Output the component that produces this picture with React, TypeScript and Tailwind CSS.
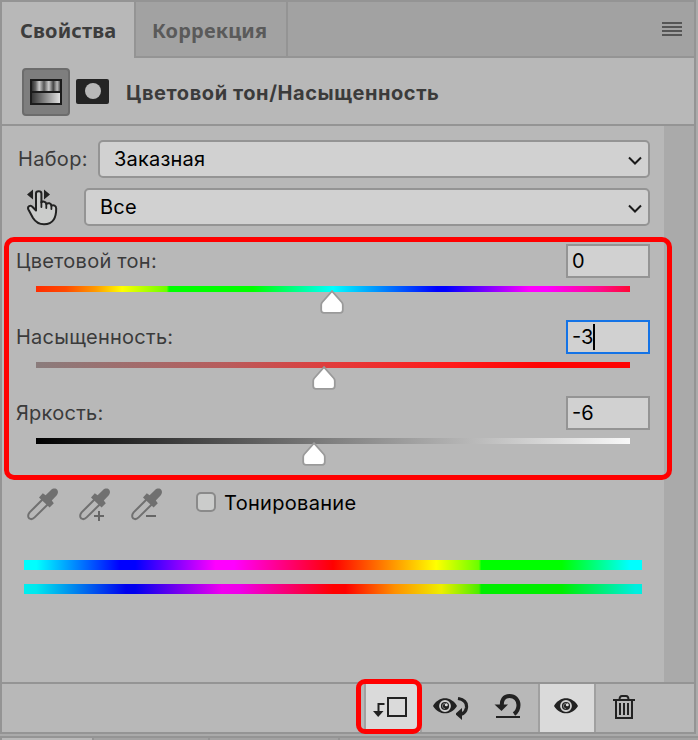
import React, { useState } from 'react';

const HUE_TRACK =
  'linear-gradient(90deg,#ff2d00 0%,#ff4a00 5%,#ff9a00 10%,#ffff00 14.5%,#6aff00 22%,#00ff00 22.4%,#00ff00 36.5%,#00ffff 50%,#0000ff 67.5%,#0000ff 69%,#ff00ff 83%,#ff00ff 86%,#ff0a8a 95%,#ff0835 100%)';
const SATURATION_TRACK = 'linear-gradient(90deg,#8a7c7c 0%,#b85c5c 32%,#e53838 52%,#ff1a1a 70%,#ff0404 85%,#ff0404 100%)';
const LIGHTNESS_TRACK = 'linear-gradient(90deg,#000000 0%,#808080 50%,#f8f8f8 100%)';

const SPECTRUM =
  'linear-gradient(90deg,#00ffff 0%,#00ffff 2%,#0000ff 15.5%,#0000ff 18%,#ff00ff 31%,#ff00ff 34%,#ff0000 50%,#ff9a00 60%,#ffff00 66.7%,#6aff00 73.6%,#00ff00 74%,#00ff00 87%,#00ffff 98%,#00ffff 100%)';
const SPECTRUM_RESULT =
  'linear-gradient(90deg,#00eeee 0%,#00e8ee 2%,#0000ee 16.5%,#0000ee 18%,#f000f0 32%,#f000e8 35%,#ff0000 50%,#ff0000 52%,#ff9000 60%,#eeee00 67.5%,#4cee00 73.6%,#00ee00 74%,#00ee00 87%,#00eee0 99%,#00eee0 100%)';

interface SliderRowProps {
  label: string;
  value: string;
  track: string;
  position: number;
  focused?: boolean;
}

function SliderRow({ label, value, track, position, focused = false }: SliderRowProps) {
  return (
    <div className="h-[76px]">
      <div className="flex h-[34px] items-center justify-between">
        <span className="text-[20px] leading-[34px] tracking-[0.25px] text-[#3b3b3b]">{label}</span>
        <div
          className={
            focused
              ? 'flex h-[34px] w-[84px] items-center border-2 border-[#1473e6] bg-[#d1d1d1] pl-1 text-[20px] text-black'
              : 'flex h-[34px] w-[84px] items-center border-2 border-[#949494] bg-[#d1d1d1] pl-1 text-[20px] text-black'
          }
        >
          <span>{value}</span>
          {focused && <span className="h-[26px] w-[2px] bg-black" />}
        </div>
      </div>
      <div className="relative mt-2 mr-5 ml-5 h-[6px]" style={{ background: track }}>
        <svg
          className="absolute top-[4px] h-6 w-6 -translate-x-1/2"
          style={{ left: position }}
          viewBox="0 0 24 24"
        >
          <path
            d="M12 1.2 L22 12.5 Q22.8 13.6 22.8 15 V20 Q22.8 22.8 20 22.8 H4 Q1.2 22.8 1.2 20 V15 Q1.2 13.6 2 12.5 Z"
            fill="#fff"
            stroke="#9a9a9a"
            strokeWidth="1.8"
          />
        </svg>
      </div>
    </div>
  );
}

function Select({ value }: { value: string }) {
  return (
    <div className="flex h-[38px] flex-1 items-center justify-between rounded-[5px] border-2 border-[#949494] bg-[#d1d1d1] pr-[6px] pl-[14px] text-[20px] tracking-[0.2px] text-black">
      <span>{value}</span>
      <svg width="14" height="10" viewBox="0 0 14 10" fill="none" className="mt-[3px]">
        <path d="M1 1.5 L7 7.5 L13 1.5" stroke="#1a1a1a" strokeWidth="2" />
      </svg>
    </div>
  );
}

function Eyedropper({ mode }: { mode?: 'plus' | 'minus' }) {
  return (
    <svg width="32" height="34" viewBox="0 0 32 34" fill="none">
      <path
        d="M15.5 11.5 L2.6 24.4 C0.5 27 1 29.5 2.2 30.3 C3.6 31.4 6 31 7.6 29.4 L20.7 16.5"
        stroke="#707070"
        strokeWidth="2"
      />
      <path
        d="M12 9.5 L15.8 5.2 L18.6 7.3 L24 2 C26 0 29.2 0.4 30.2 1.8 C31.4 3.4 31.2 5.8 29.6 7.4 L24.8 12.4 L26.8 15.2 L22.6 19.4 Z"
        fill="#707070"
      />
      {mode === 'plus' && <path d="M15 28 H25 M20 23 V33" stroke="#666" strokeWidth="2" />}
      {mode === 'minus' && <path d="M15 28 H25" stroke="#666" strokeWidth="2" />}
    </svg>
  );
}

function ScrubHand() {
  return (
    <svg width="32" height="38" viewBox="0 0 32 38" fill="none">
      <path d="M0 6.5 L6 1.5 V11.5 Z M23 6.5 L17 1.5 V11.5 Z" fill="#222" />
      <path
        d="M9 22.5 V5.5 C9 2.4 14.4 2.4 14.4 5.5 V14.5 C15.5 13 19 13.4 19.3 16 C21 14.5 24.2 15.2 24.4 17.6 C26.5 16.5 29.2 17.5 29.2 20.5 C29.2 25 29 28 26.8 31.5 C24.5 35 21 36.3 17 36.3 C12 36.3 8.5 34 6 30 L1.4 21.5 C0 18.3 3.5 16.6 5.6 19 Z"
        fill="#cbcccb"
        stroke="#222"
        strokeWidth="2"
        strokeLinejoin="round"
      />
      <path d="M14.4 14 V19 M19.3 16 V20 M24.4 17.5 V21" stroke="#222" strokeWidth="1.8" strokeLinecap="round" />
    </svg>
  );
}

function HueSaturationIcon() {
  return (
    <svg width="32" height="26" viewBox="0 0 32 26">
      <defs>
        <linearGradient id="bands">
          <stop offset="0" stopColor="#333" />
          <stop offset=".13" stopColor="#666" />
          <stop offset=".26" stopColor="#ccc" />
          <stop offset=".43" stopColor="#555" />
          <stop offset=".6" stopColor="#ccc" />
          <stop offset=".76" stopColor="#444" />
          <stop offset=".9" stopColor="#bbb" />
          <stop offset="1" stopColor="#555" />
        </linearGradient>
        <linearGradient id="ramp">
          <stop offset="0" stopColor="#383838" />
          <stop offset="1" stopColor="#e0e0e0" />
        </linearGradient>
      </defs>
      <rect width="32" height="26" fill="#1c1c1c" />
      <rect x="2" y="2" width="28" height="10" fill="url(#bands)" />
      <rect x="2" y="14" width="28" height="10" fill="url(#ramp)" />
    </svg>
  );
}

function Eye() {
  return (
    <svg width="24" height="16" viewBox="0 0 24 16" fill="none">
      <path d="M0 8 C6 -2.2 18 -2.2 24 8 C18 17.8 6 17.8 0 8 Z" fill="#222" />
      <circle cx="12" cy="8" r="5" stroke="#d0d0d0" strokeWidth="1.8" />
      <path d="M12 5.4 A2.6 2.6 0 0 0 12 10.6" stroke="#777" strokeWidth="1" />
      <circle cx="13.3" cy="6.7" r="1.5" fill="#ddd" />
    </svg>
  );
}

export default function App() {
  const [tab] = useState('properties');

  return (
    <div className="relative h-[740px] w-[698px] overflow-hidden bg-[#aaaaaa] font-['Inter','Noto_Sans',sans-serif]">
      <div className="flex h-[734px] w-[696px] flex-col border-2 border-[#949494] bg-[#b8b8b8]">
        {/* Tabs */}
        <div className="flex h-14 shrink-0 bg-[#a2a2a2] font-['Noto_Sans',sans-serif] text-[20px] font-bold tracking-[0.15px]">
          <div
            className={
              tab === 'properties'
                ? 'w-[132px] bg-[#b8b8b8] pl-[18px] leading-[58px] text-[#3d3d3d]'
                : 'w-[132px] border-b-2 border-[#949494] pl-[18px] leading-[58px]'
            }
          >
            Свойства
          </div>
          <div className="w-[154px] border-x-2 border-b-2 border-[#949494] pl-4 leading-[58px] text-[#5a5a5a]">
            Коррекция
          </div>
          <div className="flex flex-1 justify-end border-b-2 border-[#949494] pt-5 pr-3">
            <div className="flex h-[14px] w-5 flex-col justify-between">
              <div className="h-[2px] bg-[#555]" />
              <div className="h-[2px] bg-[#555]" />
              <div className="h-[2px] bg-[#555]" />
              <div className="h-[2px] bg-[#555]" />
            </div>
          </div>
        </div>

        {/* Adjustment header */}
        <div className="flex h-[68px] shrink-0 items-center border-b-2 border-[#949494] pl-5">
          <div className="mt-[2px] flex h-12 w-12 items-center justify-center rounded-[4px] border-2 border-[#6c6c6c] bg-[#7e7e7e]">
            <HueSaturationIcon />
          </div>
          <div className="ml-[6px] flex h-[25px] w-[33px] items-center justify-center rounded-[2px] bg-[#242424]">
            <div className="h-4 w-4 rounded-full bg-[#b8b8b8]" />
          </div>
          <span className="mt-1 ml-[17px] text-[20px] font-bold tracking-[0.58px] text-[#3b3b3b]">
            Цветовой тон/Насыщенность
          </span>
        </div>

        {/* Body */}
        <div className="flex h-[556px] shrink-0">
          <div className="w-[662px] pt-[14px]">
            <div className="flex h-[38px] items-center pr-[14px] pl-4">
              <span className="w-20 text-[20px] tracking-[0.3px] text-[#3b3b3b]">Набор:</span>
              <Select value="Заказная" />
            </div>
            <div className="mt-[10px] flex h-[38px] items-center pr-[14px] pl-[25px]">
              <div className="w-[57px]">
                <ScrubHand />
              </div>
              <Select value="Все" />
            </div>

            <div className="mt-[18px] pr-[14px] pl-[14px]">
              <SliderRow label="Цветовой тон:" value="0" track={HUE_TRACK} position={296} />
              <SliderRow label="Насыщенность:" value="-3" track={SATURATION_TRACK} position={288} focused />
              <SliderRow label="Яркость:" value="-6" track={LIGHTNESS_TRACK} position={278} />
            </div>

            <div className="mt-[16px] flex h-[34px] items-start pl-[25px]">
              <Eyedropper />
              <div className="ml-5">
                <Eyedropper mode="plus" />
              </div>
              <div className="ml-5">
                <Eyedropper mode="minus" />
              </div>
              <div className="mt-1 ml-[33px] flex h-5 items-center">
                <div className="h-5 w-5 rounded-[5px] border-2 border-[#8a8a8a] bg-[#cbcccb]" />
                <span className="mt-[2px] ml-2 text-[20px] tracking-[0.3px] text-black">Тонирование</span>
              </div>
            </div>

            <div className="mt-[38px] mr-[22px] ml-[22px]">
              <div className="h-[10px]" style={{ background: SPECTRUM }} />
              <div className="mt-[14px] h-[10px]" style={{ background: SPECTRUM_RESULT }} />
            </div>
          </div>
          <div className="w-[30px] bg-[#aaaaaa]" />
        </div>

        {/* Footer buttons */}
        <div className="flex h-[50px] shrink-0 border-t-2 border-[#949494]">
          <div className="ml-[362px] flex w-[58px] items-start border-x-2 border-[#a0a0a0] bg-[#dadada] pt-3 pl-[7px]">
            <svg width="35" height="22" viewBox="0 0 35 22" fill="none">
              <path d="M11.5 8 H5.5 V15" stroke="#222" strokeWidth="2" />
              <path d="M0 15 H10.5 L5.2 21 Z" fill="#222" />
              <rect x="15" y="2" width="18" height="18" stroke="#222" strokeWidth="2" />
            </svg>
          </div>
          <div className="flex w-[59px] items-start pt-[13px] pl-[11px]">
            <div className="pt-px">
              <Eye />
            </div>
            <svg width="14" height="24" viewBox="0 0 14 24" fill="none" className="-ml-px">
              <path d="M2 1.5 C8 2.5 11 5.5 10.5 10.5 C10 14.5 8 16.5 4.5 17.5" stroke="#222" strokeWidth="3.2" />
              <path d="M-1 17 L6 11 V23 Z" fill="#222" />
            </svg>
          </div>
          <div className="flex w-[57px] items-start pt-[9px] pl-[13px]">
            <svg width="28" height="26" viewBox="0 0 28 26" fill="none">
              <path d="M8 14 C7 7 10 3 15.5 3 C21 3 24.5 7 24.5 12 C24.5 16 23.5 18.5 20 21" stroke="#222" strokeWidth="4" />
              <path d="M0.5 11.5 H14 L7.5 18 Z" fill="#222" />
              <path d="M2 24 H26" stroke="#222" strokeWidth="2" />
            </svg>
          </div>
          <div className="flex w-[58px] items-start justify-center border-x-2 border-[#a0a0a0] bg-[#dadada] pt-[14px] pr-[2px]">
            <Eye />
          </div>
          <div className="pt-[11px] pl-[17px]">
            <svg width="22" height="24" viewBox="0 0 22 24" fill="none">
              <path d="M0 5 H22 M6.5 5 C6.5 1.5 7.5 1 9 1 H13 C14.5 1 15.5 1.5 15.5 5 M3 5 V23 H19 V5 M7 8 V20 M11 8 V20 M15 8 V20" stroke="#222" strokeWidth="2" />
            </svg>
          </div>
        </div>
      </div>

      {/* Next panel's tab strip, cut by the window edge */}
      <div className="mt-[2px] flex h-1 w-[698px] gap-[2px] border-t-2 border-[#949494] bg-[#949494] pl-[2px]">
        <div className="w-[90px] bg-[#b8b8b8]" />
        <div className="w-[114px] bg-[#a2a2a2]" />
        <div className="w-[128px] bg-[#a2a2a2]" />
        <div className="flex-1 bg-[#a2a2a2]" />
      </div>

      {/* Highlight frames */}
      <div className="absolute top-[237px] left-[4px] h-[243px] w-[668px] rounded-[10px] border-[5px] border-[#ff0000]" />
      <div className="absolute top-[679px] left-[356px] h-[55px] w-[66px] rounded-[9px] border-[5px] border-[#ff0000]" />
    </div>
  );
}
